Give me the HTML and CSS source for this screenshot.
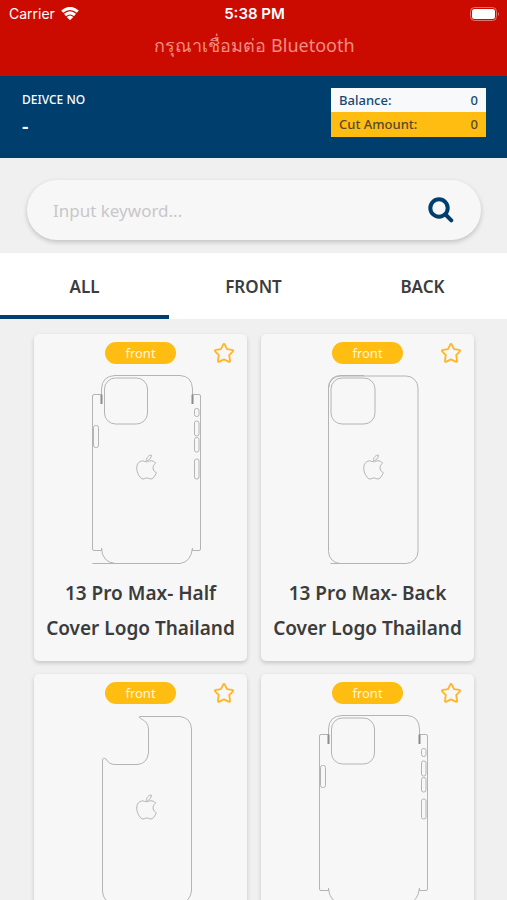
FILE: index.html
```html
<!DOCTYPE html>
<html lang="en">
<head>
<meta charset="utf-8">
<meta name="viewport" content="width=device-width, initial-scale=1">
<title>Cover templates</title>
<link rel="stylesheet" href="styles.css">
</head>
<body>
<svg class="defs" aria-hidden="true">
  <symbol id="star" viewBox="0 0 24 24">
    <path d="M11 3.1Q12 1.200 13 3.100L15.300 7.700L20.800 8.600Q22.700 9 21.400 10.500L17.700 14.300L18.600 20.200Q18.700 22.100 17 21.400L12 19L7 21.400Q5.300 22.100 5.400 20.200L6.300 14.300L2.600 10.500Q1.300 9 3.200 8.600L8.700 7.700Z"/>
  </symbol>
  <symbol id="logo" viewBox="0 0 24 24" overflow="visible">
    <path d="M12.152 6.896c-.948 0-2.415-1.078-3.96-1.04-2.04.027-3.91 1.183-4.961 3.014-2.117 3.675-.546 9.103 1.519 12.09 1.013 1.454 2.208 3.09 3.792 3.039 1.52-.065 2.09-.987 3.935-.987 1.831 0 2.35.987 3.96.948 1.637-.026 2.676-1.48 3.676-2.948 1.156-1.688 1.636-3.325 1.662-3.415-.039-.013-3.182-1.221-3.22-4.857-.026-3.04 2.48-4.494 2.597-4.559-1.429-2.09-3.623-2.324-4.39-2.376-2-.156-3.675 1.09-4.61 1.09zM15.53 3.83c.843-1.012 1.4-2.427 1.245-3.83-1.207.052-2.662.805-3.532 1.818-.78.896-1.454 2.338-1.273 3.714 1.338.104 2.715-.688 3.559-1.701z"/>
  </symbol>
  <symbol id="half-cover" viewBox="70 370 141 200">
    <path d="M101.500 404V389Q102 376 115 375.500H180Q192 376 192.500 389V404M101.500 394.500H94Q92.500 394.500 92.500 396V549Q92.500 550.500 94 550.500H101.500V548Q102 562 115 563.500H180Q191 562 192.500 548V550.500H199Q200.500 550.500 200.500 549V396Q200.500 394.500 199 394.500H192.500M92.500 563.500H115"/>
    <path class="edge" d="M101.500 394.500V404M192.500 394.500V404"/>
    <rect x="104.500" y="378" width="43" height="46" rx="11"/>
    <rect x="93.500" y="425.500" width="5" height="22" rx="2"/>
    <rect x="194.500" y="408.500" width="4.500" height="8" rx="2"/>
    <rect x="194.500" y="421" width="4.500" height="15" rx="2"/>
    <rect x="194.500" y="437.500" width="4.500" height="14.500" rx="2"/>
    <rect x="194.500" y="459" width="4.500" height="20" rx="2"/>
  </symbol>
  <symbol id="back-cover" viewBox="70 370 141 200">
    <rect x="101.500" y="376" width="89.500" height="187.500" rx="12"/>
    <rect x="104" y="378" width="44" height="46" rx="11"/>
    <path d="M101.500 388Q102 375.500 114 375.500H137M103.500 563.500H114"/>
  </symbol>
  <symbol id="cutout-cover" viewBox="70 370 141 200">
    <path d="M139.500 376.500H180Q191 378 191.500 389V551Q190 562 180 563.500H114Q103 562 102.500 551V420Q103 417 106 419Q109 424.500 115 424.500H137Q147 424 148.500 413V389Q148 382 141.500 379Q138 377 139.500 376.500Z"/>
  </symbol>
</svg>

<div class="app">
  <header class="status">
    <div class="status-bar">
      <span class="carrier">Carrier
        <svg class="wifi" viewBox="0 0 18 14" aria-hidden="true"><path d="M1.200 4.700Q9-2 16.800 4.700M4 8Q9 3.700 14 8"/><path class="solid" d="M5.700 10Q9 7 12.300 10L9 13.300Z"/></svg>
      </span>
      <span class="clock">5:38 PM</span>
      <svg class="battery" viewBox="0 0 30 14" aria-hidden="true"><rect class="shell" x="0.500" y="0.500" width="26" height="13" rx="4"/><rect class="charge" x="2" y="2" width="23" height="10" rx="2.500"/><path class="shell-tip" d="M28 5Q30 7 28 9Z"/></svg>
    </div>
    <p class="notice" lang="th">กรุณาเชื่อมต่อ Bluetooth</p>
  </header>

  <section class="device">
    <div>
      <div class="device-label">DEIVCE NO</div>
      <div class="device-value">-</div>
    </div>
    <dl class="totals">
      <div class="total"><dt>Balance:</dt><dd>0</dd></div>
      <div class="total total-cut"><dt>Cut Amount:</dt><dd>0</dd></div>
    </dl>
  </section>

  <form class="search">
    <div class="search-box">
      <input type="text" class="search-input" placeholder="Input keyword..." aria-label="Input keyword">
      <button type="button" class="search-button" aria-label="Search">
        <svg viewBox="0 0 26 26" aria-hidden="true"><circle cx="11" cy="11" r="8.700"/><path d="M17.500 17.500L23.300 23.300"/></svg>
      </button>
    </div>
  </form>

  <nav class="tabs">
    <button type="button" class="tab tab-active">ALL</button>
    <button type="button" class="tab">FRONT</button>
    <button type="button" class="tab">BACK</button>
  </nav>

  <main class="grid">
    <article class="card">
      <div class="card-top"><span class="badge">front</span><button type="button" class="favorite" aria-label="Favorite"><svg><use href="#star"/></svg></button></div>
      <svg class="drawing" viewBox="70 370 141 200" aria-hidden="true"><use href="#half-cover" x="70" y="370" width="141" height="200"/><use href="#logo" x="134" y="455" width="25" height="24"/></svg>
      <h2 class="title">13 Pro Max- Half Cover Logo Thailand</h2>
    </article>
    <article class="card">
      <div class="card-top"><span class="badge">front</span><button type="button" class="favorite" aria-label="Favorite"><svg><use href="#star"/></svg></button></div>
      <svg class="drawing" viewBox="70 370 141 200" aria-hidden="true"><use href="#back-cover" x="70" y="370" width="141" height="200"/><use href="#logo" x="134" y="455" width="25" height="24"/></svg>
      <h2 class="title">13 Pro Max- Back Cover Logo Thailand</h2>
    </article>
    <article class="card">
      <div class="card-top"><span class="badge">front</span><button type="button" class="favorite" aria-label="Favorite"><svg><use href="#star"/></svg></button></div>
      <svg class="drawing" viewBox="70 370 141 200" aria-hidden="true"><use href="#cutout-cover" x="70" y="370" width="141" height="200"/><use href="#logo" x="134" y="455" width="25" height="24"/></svg>
    </article>
    <article class="card">
      <div class="card-top"><span class="badge">front</span><button type="button" class="favorite" aria-label="Favorite"><svg><use href="#star"/></svg></button></div>
      <svg class="drawing" viewBox="70 370 141 200" aria-hidden="true"><use href="#half-cover" x="70" y="370" width="141" height="200"/></svg>
    </article>
  </main>
</div>
</body>
</html>
```
FILE: styles.css
```css
* {
  box-sizing: border-box;
}

body {
  margin: 0;
  background: #f0f0f0;
  color: #3c3c3c;
  font-family: "Noto Sans", "Open Sans", sans-serif;
}

button,
input {
  font: inherit;
  color: inherit;
  background: none;
  border: 0;
  padding: 0;
}

.defs {
  display: none;
}

.app {
  display: flex;
  flex-direction: column;
  height: 100vh;
  overflow: hidden;
}

.status {
  flex: none;
  background: #cb0b00;
  color: #fff;
  padding: 4px 7px 15px 9px;
}

.status-bar {
  display: grid;
  grid-template-columns: 1fr auto 1fr;
  align-items: center;
  font-family: Inter, Roboto, sans-serif;
  font-size: 15px;
  line-height: 20px;
}

.carrier {
  display: flex;
  align-items: center;
  gap: 6px;
  font-size: 14px;
}

.wifi {
  width: 18px;
  height: 14px;
  fill: none;
  stroke: #fff;
  stroke-width: 3;
}

.wifi .solid {
  fill: #fff;
  stroke: none;
}

.clock {
  font-weight: 600;
}

.battery {
  justify-self: end;
  width: 30px;
  height: 14px;
}

.shell {
  fill: none;
  stroke: #e4756d;
}

.shell-tip {
  fill: #e4756d;
}

.charge {
  fill: #fff;
}

.notice {
  margin: 6px 0 0;
  text-align: center;
  font-size: 18px;
  line-height: 31px;
  color: #f28d84;
}

.device {
  flex: none;
  display: flex;
  justify-content: space-between;
  background: #003e6e;
  color: #fff;
  padding: 12px 21px 21px 22px;
}

.device-label {
  font-size: 12px;
  font-weight: 500;
  line-height: 24px;
}

.device-value {
  margin-top: 2px;
  font-size: 20px;
  font-weight: 600;
  line-height: 23px;
}

.totals {
  width: 155px;
  margin: 0;
  font-size: 13px;
  font-weight: 500;
  line-height: 24px;
}

.total {
  display: flex;
  justify-content: space-between;
  padding: 0 8px;
  background: #f8f9fb;
  color: #174872;
}

.total dd {
  margin: 0;
}

.total-cut {
  background: #ffbc11;
  color: #554a32;
  padding-bottom: 1px;
}

.search {
  flex: none;
  padding: 22px 26px 13px 27px;
}

.search-box {
  display: flex;
  align-items: center;
  height: 60px;
  padding: 0 27px 0 26px;
  border-radius: 30px;
  background: #f7f7f7;
  box-shadow: 0 2px 5px rgba(0, 0, 0, 0.2);
}

.search-input {
  flex: 1;
  min-width: 0;
  font-size: 17px;
  outline: 0;
}

.search-input::placeholder {
  color: #c7c7c7;
  opacity: 1;
}

.search-button {
  width: 26px;
  height: 26px;
}

.search-button svg {
  display: block;
  fill: none;
  stroke: #003e6e;
  stroke-width: 4;
  stroke-linecap: round;
}

.tabs {
  flex: none;
  display: grid;
  grid-template-columns: repeat(3, 1fr);
  background: #fff;
}

.tab {
  height: 66px;
  border-top: 4px solid transparent;
  border-bottom: 4px solid transparent;
  font-size: 17px;
  font-weight: 600;
}

.tab-active {
  border-bottom-color: #003e6e;
}

.grid {
  flex: 1;
  min-height: 0;
  overflow-y: auto;
  scrollbar-width: none;
  display: grid;
  grid-template-columns: repeat(2, 1fr);
  grid-auto-rows: 327px;
  gap: 13px 14px;
  padding: 15px 33px 15px 34px;
}

.card {
  display: flex;
  flex-direction: column;
  align-items: center;
  gap: 6px;
  padding: 8px 12px 15px;
  border-radius: 5px;
  background: #f7f7f7;
  box-shadow: 0 2px 4px rgba(0, 0, 0, 0.18);
}

.card-top {
  align-self: stretch;
  display: grid;
  grid-template-columns: 1fr auto 1fr;
  align-items: center;
}

.badge {
  grid-column: 2;
  width: 71px;
  border-radius: 11px;
  background: #ffbc11;
  color: #fff6da;
  font-size: 13px;
  line-height: 22px;
  text-align: center;
}

.favorite {
  justify-self: end;
  width: 22px;
  height: 22px;
}

.favorite svg {
  display: block;
  width: 22px;
  height: 22px;
  fill: none;
  stroke: #ffb524;
  stroke-width: 2;
  stroke-linejoin: round;
}

.drawing {
  flex: none;
  width: 141px;
  height: 200px;
  fill: none;
  stroke: #b4b4b4;
  stroke-width: 1;
}

.edge {
  stroke: #8c8c8c;
  stroke-width: 2;
}

.title {
  margin: 0 -4px;
  font-size: 19px;
  font-weight: 600;
  line-height: 35px;
  text-align: center;
}
```
